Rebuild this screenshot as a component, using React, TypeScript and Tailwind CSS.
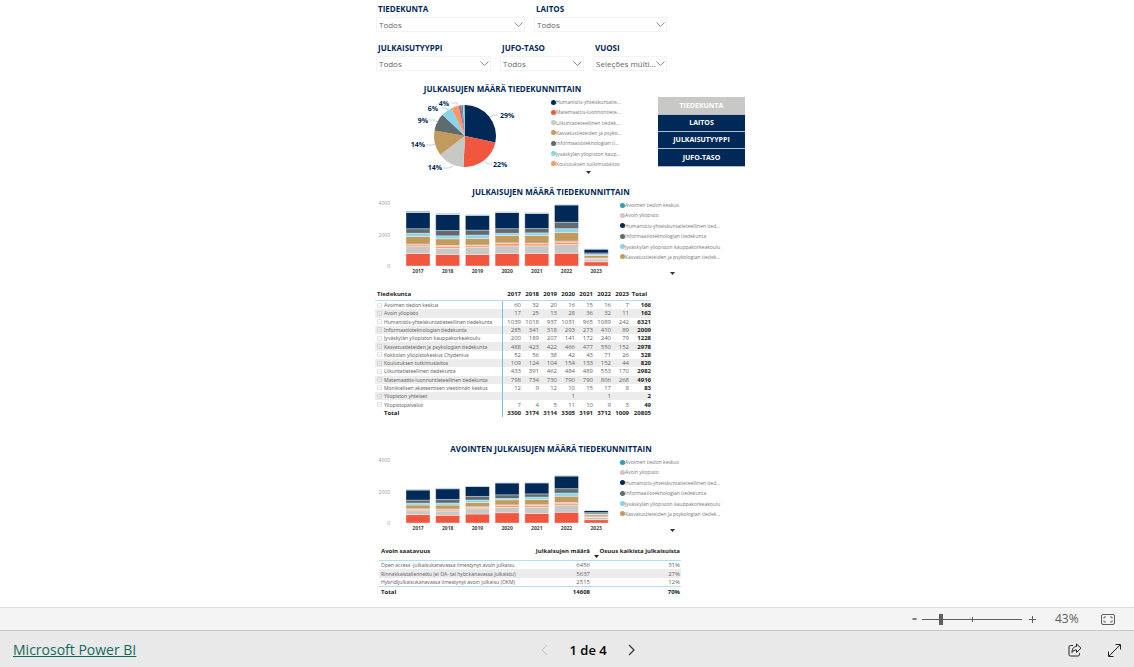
import React, { useState } from "react";

const YEARS = ["2017", "2018", "2019", "2020", "2021", "2022", "2023"];

type Row = { name: string; values: (number | null)[]; total: number };

const ROWS: Row[] = [
  { name: "Avoimen tiedon keskus", values: [60, 32, 20, 16, 15, 16, 7], total: 166 },
  { name: "Avoin yliopisto", values: [17, 25, 13, 28, 36, 32, 11], total: 162 },
  { name: "Humanistis-yhteiskuntatieteellinen tiedekunta", values: [1039, 1018, 937, 1031, 965, 1089, 242], total: 6321 },
  { name: "Informaatioteknologian tiedekunta", values: [285, 341, 318, 293, 273, 410, 89], total: 2009 },
  { name: "Jyväskylän yliopiston kauppakorkeakoulu", values: [200, 189, 207, 141, 172, 240, 79], total: 1228 },
  { name: "Kasvatustieteiden ja psykologian tiedekunta", values: [488, 423, 422, 466, 477, 550, 152], total: 2978 },
  { name: "Kokkolan yliopistokeskus Chydenius", values: [52, 56, 38, 42, 43, 71, 26], total: 328 },
  { name: "Koulutuksen tutkimuslaitos", values: [109, 124, 104, 154, 133, 152, 44], total: 820 },
  { name: "Liikuntatieteellinen tiedekunta", values: [433, 391, 462, 484, 489, 553, 170], total: 2982 },
  { name: "Matemaattis-luonnontieteellinen tiedekunta", values: [798, 734, 730, 790, 790, 806, 268], total: 4916 },
  { name: "Monikielisen akateemisen viestinnän keskus", values: [12, 9, 12, 10, 15, 17, 8], total: 83 },
  { name: "Yliopiston yhteiset", values: [null, null, null, 1, null, 1, null], total: 2 },
  { name: "Yliopistopalvelut", values: [7, 4, 5, 11, 10, 9, 3], total: 49 },
];

const TOTALS = [3300, 3174, 3114, 3305, 3191, 3712, 1009];

// bottom of the stack first
const STACK_COLORS = ["#f1563f", "#c8c9c7", "#fe9666", "#c78da0", "#c29a5b", "#8ad4eb", "#5f6b6d", "#002957", "#dfbfbf", "#3599b8"];

const ALL_STACKS = YEARS.map((_, i) => [9, 8, 7, 6, 5, 4, 3, 2, 1, 0].map((r) => ROWS[r].values[i] ?? 0));

const OPEN_STACKS = [
  [530, 254, 70, 50, 240, 120, 190, 640, 15, 30],
  [490, 270, 80, 50, 250, 130, 230, 670, 25, 30],
  [570, 340, 80, 40, 270, 160, 230, 630, 15, 15],
  [650, 340, 120, 40, 320, 90, 230, 750, 20, 15],
  [610, 400, 110, 40, 330, 160, 200, 690, 30, 15],
  [680, 460, 110, 50, 400, 200, 280, 800, 30, 20],
  [210, 140, 30, 20, 120, 60, 80, 130, 10, 5],
];

const CHART_LEGEND = [
  { color: "#3599b8", text: "Avoimen tiedon keskus" },
  { color: "#dfbfbf", text: "Avoin yliopisto" },
  { color: "#002957", text: "Humanistis-yhteiskuntatieteellinen tied..." },
  { color: "#5f6b6d", text: "Informaatioteknologian tiedekunta" },
  { color: "#8ad4eb", text: "Jyväskylän yliopiston kauppakorkeakoulu" },
  { color: "#c29a5b", text: "Kasvatustieteiden ja psykologian tiedek..." },
];

const PIE_LEGEND = [
  { color: "#002957", text: "Humanistis-yhteiskuntatie..." },
  { color: "#f1563f", text: "Matemaattis-luonnontiete..." },
  { color: "#c8c9c7", text: "Liikuntatieteellinen tiedek..." },
  { color: "#c29a5b", text: "Kasvatustieteiden ja psyko..." },
  { color: "#5f6b6d", text: "Informaatioteknologian ti..." },
  { color: "#8ad4eb", text: "Jyväskylän yliopiston kaup..." },
  { color: "#fe9666", text: "Koulutuksen tutkimuslaitos" },
];

const SLICES = [
  { color: "#002957", from: 0, to: 102 },
  { color: "#f1563f", from: 102, to: 183 },
  { color: "#c8c9c7", from: 183, to: 233 },
  { color: "#c29a5b", from: 233, to: 280 },
  { color: "#5f6b6d", from: 280, to: 313 },
  { color: "#8ad4eb", from: 313, to: 334 },
  { color: "#fe9666", from: 334, to: 348 },
  { color: "#a66999", from: 348, to: 353 },
  { color: "#3599b8", from: 353, to: 356 },
  { color: "#dfbfbf", from: 356, to: 358 },
  { color: "#4ac5bb", from: 358, to: 360 },
];

function Filter({ id, label, value, width }: { id: string; label: string; value: string; width: string }) {
  return (
    <div className={width}>
      <label htmlFor={id} className="block pl-0.5 text-[8px] leading-[10px] font-bold text-[#002957]">{label}</label>
      <div className="relative mt-[3px]">
        <select id={id} className="block h-[15px] w-full appearance-none border border-[#f3f3f3] bg-white pl-0.5 pr-2 text-[8px] leading-[13px] text-[#666] outline-none">
          <option>{value}</option>
        </select>
        <svg className="pointer-events-none absolute right-0.5 top-1 h-[7px] w-[9px]" viewBox="0 0 9 7" fill="none" stroke="#7d8794">
          <path d="M0.5 1.5 L4.5 5.5 L8.5 1.5" strokeWidth="0.9" />
        </svg>
      </div>
    </div>
  );
}

function Legend({ items, height, arrow }: { items: { color: string; text: string }[]; height: string; arrow: string }) {
  return (
    <div className="flex flex-col items-center">
      <ul className={"flex w-full flex-col justify-between " + height}>
        {items.map((item) => (
          <li key={item.text} className="flex items-center whitespace-nowrap text-[5px] leading-[10px] text-[#777]">
            <svg className="h-[5px] w-[5px]" viewBox="0 0 5 5"><circle cx="2.5" cy="2.5" r="2.5" fill={item.color} /></svg>
            {item.text}
          </li>
        ))}
      </ul>
      <button aria-label="Lisää selitteitä" className={arrow}>
        <svg className="block h-[3px] w-[5px]" viewBox="0 0 5 3"><path d="M0 0h5L2.5 3z" fill="#333" /></svg>
      </button>
    </div>
  );
}

function Pie() {
  const cx = 90;
  const cy = 39;
  const r = 31;
  const point = (deg: number) => {
    const a = (deg * Math.PI) / 180;
    return `${cx + r * Math.sin(a)} ${cy - r * Math.cos(a)}`;
  };
  return (
    <svg className="h-[78px] w-[176px]" viewBox="0 0 176 78">
      {SLICES.map((s) => (
        <path key={s.from} d={`M${cx} ${cy} L${point(s.from)} A${r} ${r} 0 0 1 ${point(s.to)} Z`} fill={s.color} />
      ))}
      <g fill="none" stroke="#b3bcc6" strokeWidth="0.7">
        <path d="M115 20l3-2h5M110 65l3 2h4M78 69l-4 2h-6M61 47l-4 1h-6M63 26l-3-3h-7M73 13l-2-2h-4M83 8l-1-2h-6" />
      </g>
      <g className="text-[7px] font-bold" fill="#002957">
        <text x="125" y="21">29%</text>
        <text x="118" y="70">22%</text>
        <text x="67" y="73" textAnchor="end">14%</text>
        <text x="50" y="50" textAnchor="end">14%</text>
        <text x="53" y="26" textAnchor="end">9%</text>
        <text x="63" y="14" textAnchor="end">6%</text>
        <text x="74" y="9" textAnchor="end">4%</text>
      </g>
    </svg>
  );
}

function StackedChart({ title, stacks }: { title: string; stacks: number[][] }) {
  const scale = 63 / 4000;
  return (
    <section className="w-[352px]">
      <h2 className="text-center text-[8px] leading-[10px] font-bold text-[#002957]">{title}</h2>
      <div className="flex">
        <svg className="h-[80px] w-[245px]" viewBox="0 0 245 80">
          <g className="text-[5px]" fill="#999" textAnchor="end">
            <text x="15" y="8">4000</text>
            <text x="15" y="40">2000</text>
            <text x="15" y="71">0</text>
          </g>
          {stacks.map((stack, i) => {
            const x = 31 + i * 29.7;
            let y = 69;
            return (
              <g key={YEARS[i]}>
                {stack.map((v, j) => {
                  const h = v * scale;
                  y -= h;
                  return <rect key={j} x={x} y={y} width="24" height={h} fill={STACK_COLORS[j]} stroke="#fff" strokeOpacity="0.4" strokeWidth="0.9" />;
                })}
                <text x={x + 12} y="76" textAnchor="middle" className="text-[5px] font-bold" fill="#444">{YEARS[i]}</text>
              </g>
            );
          })}
        </svg>
        <div className="w-[104px] pt-[3px]">
          <Legend items={CHART_LEGEND} height="h-[62px]" arrow="mt-2.5" />
        </div>
      </div>
    </section>
  );
}

function FacultyTable() {
  return (
    <table className="h-[129px] w-[276px] table-fixed border-separate border-spacing-0 text-[6px] leading-[8px] text-[#666]">
      <colgroup>
        <col className="w-[128px]" />
        {YEARS.map((y) => <col key={y} className="w-[18px]" />)}
        <col />
      </colgroup>
      <thead>
        <tr className="text-[#222]">
          <th className="h-[13px] border-b border-[#b3dcf7] pl-0.5 text-left font-bold">Tiedekunta</th>
          {YEARS.map((y) => <th key={y} className="border-b border-[#b3dcf7] text-right font-bold">{y}</th>)}
          <th className="border-b border-[#b3dcf7] pr-1 text-right font-bold">Total</th>
        </tr>
      </thead>
      <tbody>
        {ROWS.map((row) => (
          <tr key={row.name} className="even:bg-[#ececec]">
            <td className="border-r border-[#7fbce8] pl-0.5 font-['Noto_Sans',sans-serif] text-[5px] whitespace-nowrap">
              <div className="flex items-center gap-0.5">
                <button aria-label={"Laajenna " + row.name}>
                  <svg className="block h-[5px] w-[5px]" viewBox="0 0 5 5" fill="none" stroke="#bbb" strokeWidth="0.4">
                    <path d="M0.5 0.5h4v4h-4zM1.5 2.5h2" />
                  </svg>
                </button>
                {row.name}
              </div>
            </td>
            {row.values.map((v, i) => <td key={i} className="text-right">{v}</td>)}
            <td className="text-right font-bold text-[#222]">{row.total}</td>
          </tr>
        ))}
        <tr className="font-bold text-[#222]">
          <td className="border-r border-[#7fbce8] pl-[9px]">Total</td>
          {TOTALS.map((v) => <td key={v} className="text-right">{v}</td>)}
          <td className="text-right">20805</td>
        </tr>
      </tbody>
    </table>
  );
}

function AccessTable() {
  const rows = [
    ["Open access -julkaisukanavassa ilmestynyt avoin julkaisu", "6456", "31%"],
    ["Rinnakkaistallennettu (ei OA- tai hybr.kanavassa julkaistu)", "5637", "27%"],
    ["Hybridijulkaisukanavassa ilmestynyt avoin julkaisu (OKM)", "2515", "12%"],
  ];
  return (
    <table className="ml-1 h-[50px] w-[302px] table-fixed border-separate border-spacing-0 text-[6px] leading-[8px] text-[#666]">
      <colgroup>
        <col className="w-[149px]" />
        <col className="w-[62px]" />
        <col />
      </colgroup>
      <thead>
        <tr className="whitespace-nowrap text-[#222]">
          <th className="h-[15px] border-b border-[#b3dcf7] pt-px pl-0.5 text-left align-top font-bold">Avoin saatavuus</th>
          <th className="border-b border-[#b3dcf7] pt-px text-right align-top font-bold">Julkaisujen määrä</th>
          <th className="border-b border-[#b3dcf7] pt-px pr-px text-right align-top font-bold">
            Osuus kaikista julkaisuista
            <svg className="ml-1 block h-[3px] w-[5px]" viewBox="0 0 5 3"><path d="M0 0h5L2.5 3z" fill="#222" /></svg>
          </th>
        </tr>
      </thead>
      <tbody>
        {rows.map((r) => (
          <tr key={r[0]} className="whitespace-nowrap even:bg-[#ececec]">
            <td className="pl-0.5 font-['Noto_Sans',sans-serif] text-[5px]">{r[0]}</td>
            <td className="text-right">{r[1]}</td>
            <td className="pr-px text-right">{r[2]}</td>
          </tr>
        ))}
        <tr className="font-bold text-[#222]">
          <td className="border-t border-[#b3dcf7] pl-0.5">Total</td>
          <td className="border-t border-[#b3dcf7] text-right">14608</td>
          <td className="border-t border-[#b3dcf7] pr-px text-right">70%</td>
        </tr>
      </tbody>
    </table>
  );
}

function ZoomBar() {
  const [zoom, setZoom] = useState(18);
  return (
    <div className="flex h-[23px] items-center justify-end border-t border-[#dcdcdc] bg-[#f4f4f4] pr-[19px] text-[#605e5c]">
      <button aria-label="Pienennä" className="mr-[5px]">
        <svg className="block h-[10px] w-[5px]" viewBox="0 0 5 10"><path d="M0.5 5h4" stroke="#605e5c" strokeWidth="1.6" /></svg>
      </button>
      <div className="relative flex w-[100px] items-center">
        <input
          type="range"
          aria-label="Zoomaus"
          value={zoom}
          onChange={(e) => setZoom(Number(e.target.value))}
          className="h-[11px] w-full appearance-none bg-transparent outline-none [&::-webkit-slider-runnable-track]:h-px [&::-webkit-slider-runnable-track]:bg-[#605e5c] [&::-webkit-slider-thumb]:-mt-[5px] [&::-webkit-slider-thumb]:h-[11px] [&::-webkit-slider-thumb]:w-1 [&::-webkit-slider-thumb]:appearance-none [&::-webkit-slider-thumb]:bg-[#605e5c]"
        />
        <span className="pointer-events-none absolute left-1/2 h-[5px] w-px bg-[#605e5c]"></span>
      </div>
      <button aria-label="Suurenna" className="ml-1.5">
        <svg className="block h-[9px] w-[9px]" viewBox="0 0 9 9"><path d="M1 4.5h7M4.5 1v7" stroke="#605e5c" strokeWidth="1" /></svg>
      </button>
      <span className="ml-[18px] w-7 text-[12px] leading-4">43%</span>
      <button aria-label="Sovita sivulle" className="ml-[18px]">
        <svg className="block h-[11px] w-[14px]" viewBox="0 0 14 11" fill="none" stroke="#605e5c">
          <rect x="0.5" y="0.5" width="13" height="10" rx="1.5" />
          <path d="M3 4.5v-1.5h2M9 3h2v1.5M11 6.5V8H9M5 8H3V6.5" strokeWidth="0.9" />
        </svg>
      </button>
    </div>
  );
}

function Footer() {
  return (
    <footer className="flex h-[37px] items-center justify-between border-t border-[#c8c8c8] bg-[#e9e9e9] px-[13px] pt-0.5">
      <a href="#powerbi" className="text-[14px] leading-5 text-[#11695c] underline">Microsoft Power BI</a>
      <div className="flex items-center">
        <button aria-label="Edellinen sivu" disabled>
          <svg className="block h-3 w-[7px]" viewBox="0 0 7 12" fill="none" stroke="#c4c4c4"><path d="M6 1L1 6l5 5" /></svg>
        </button>
        <span className="w-20 text-center text-[13px] leading-5 font-semibold text-black">1 de 4</span>
        <button aria-label="Seuraava sivu">
          <svg className="block h-3 w-[7px]" viewBox="0 0 7 12" fill="none" stroke="#333"><path d="M1 1l5 5-5 5" strokeWidth="1.2" /></svg>
        </button>
      </div>
      <div className="flex items-center gap-[26px] pl-7">
        <button aria-label="Jaa">
          <svg className="block h-[14px] w-[14px]" viewBox="0 0 14 14" fill="none" stroke="#222" strokeLinejoin="round">
            <path d="M5 2.5H2.500a1.500 1.500 0 0 0-1.500 1.500v7.500A1.500 1.500 0 0 0 2.500 13h7.500a1.500 1.500 0 0 0 1.500-1.500V10" />
            <path d="M8.500 1v2.500C5.500 3.500 4 6 4 9.500 5.200 7.500 6.500 7 8.500 7v2.500L13 5.200z" />
          </svg>
        </button>
        <button aria-label="Koko näyttö">
          <svg className="block h-[13px] w-[13px]" viewBox="0 0 13 13" fill="none" stroke="#222">
            <path d="M1 12L12 1M7.500 0.500h5v5M0.500 7.500v5h5" />
          </svg>
        </button>
      </div>
    </footer>
  );
}

function App() {
  const [view, setView] = useState("TIEDEKUNTA");
  return (
    <div className="flex min-h-screen flex-col bg-white font-['Open_Sans','Noto_Sans',sans-serif]">
      <main className="mx-auto w-full max-w-[384px] flex-1 pt-1">
        <div className="flex gap-[9px] pl-px">
          <Filter id="tiedekunta" label="TIEDEKUNTA" value="Todos" width="w-[149px]" />
          <Filter id="laitos" label="LAITOS" value="Todos" width="w-[133px]" />
        </div>
        <div className="mt-[11px] flex gap-[9px] pl-px">
          <Filter id="tyyppi" label="JULKAISUTYYPPI" value="Todos" width="w-[115px]" />
          <Filter id="jufo" label="JUFO-TASO" value="Todos" width="w-[84px]" />
          <Filter id="vuosi" label="VUOSI" value="Seleções múlti..." width="w-[74px]" />
        </div>

        <div className="mt-[13px] flex">
          <section className="w-[255px]">
            <h2 className="text-center text-[8px] leading-[10px] font-bold text-[#002957]">JULKAISUJEN MÄÄRÄ TIEDEKUNNITTAIN</h2>
            <div className="mt-[3px] flex">
              <Pie />
              <div className="w-[74px]">
                <Legend items={PIE_LEGEND} height="h-[72px]" arrow="mt-0.5" />
              </div>
            </div>
          </section>
          <div className="ml-7 flex w-[87px] flex-col pt-[13px]">
            {["TIEDEKUNTA", "LAITOS", "JULKAISUTYYPPI", "JUFO-TASO"].map((name) => (
              <button
                key={name}
                onClick={() => setView(name)}
                className={"h-[17px] border-b border-[#b4bcc6] text-[7px] leading-[16px] font-bold text-white first:h-[18px] last:h-[18px] " + (view === name ? "bg-[#c8c9c7]" : "bg-[#002957]")}
              >
                {name}
              </button>
            ))}
          </div>
        </div>

        <div className="mt-3">
          <StackedChart title="JULKAISUJEN MÄÄRÄ TIEDEKUNNITTAIN" stacks={ALL_STACKS} />
        </div>
        <div className="mt-[11px]">
          <FacultyTable />
        </div>
        <div className="mt-[27px]">
          <StackedChart title="AVOINTEN JULKAISUJEN MÄÄRÄ TIEDEKUNNITTAIN" stacks={OPEN_STACKS} />
        </div>
        <div className="mt-3">
          <AccessTable />
        </div>
      </main>
      <ZoomBar />
      <Footer />
    </div>
  );
}

export default App;
